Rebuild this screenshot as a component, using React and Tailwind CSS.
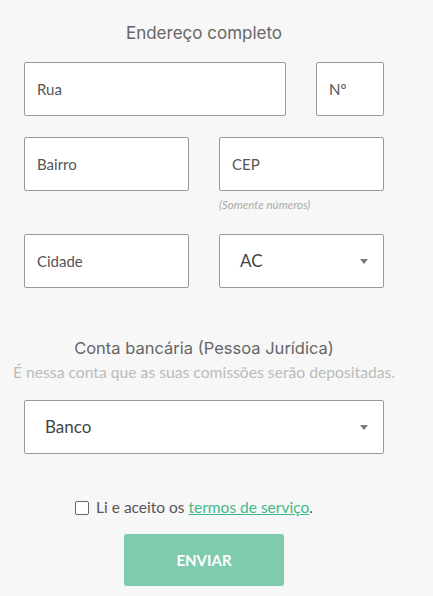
const Field = ({ label, className = "" }) => (
  <div className={`h-[54px] bg-white border border-[#999] rounded-[2px] flex items-center pl-3 text-[15px] text-[#555] ${className}`}>
    {label}
  </div>
);

const Select = ({ label, className = "" }) => (
  <div className={`h-[54px] bg-white border border-[#999] rounded-[2px] flex items-center pl-5 pr-[15px] text-[17px] text-[#444] ${className}`}>
    <span className="flex-1">{label}</span>
    <span className="w-0 h-0 border-l-[4px] border-r-[4px] border-t-[5px] border-l-transparent border-r-transparent border-t-[#777]" />
  </div>
);

export default function App() {
  return (
    <div className="min-h-[596px] bg-[#f7f7f7]" style={{ fontFamily: "Lato, 'Open Sans', sans-serif" }}>
      <div className="w-[408px] px-6 pt-[21px] pb-[10px]">
        <h2 className="text-center text-[17px] text-[#666] leading-6 mb-[17px]" style={{ fontFamily: "Inter, 'Open Sans', sans-serif", fontWeight: 400 }}>
          Endereço completo
        </h2>

        <div className="flex gap-[30px]">
          <Field label="Rua" className="flex-1" />
          <Field label="Nº" className="w-[68px]" />
        </div>

        <div className="grid grid-cols-2 gap-x-[30px] mt-[21px]">
          <Field label="Bairro" />
          <div>
            <Field label="CEP" />
            <div className="text-[11.5px] italic text-[#aaa] mt-[8px] leading-3">(Somente números)</div>
          </div>
        </div>

        <div className="grid grid-cols-2 gap-x-[30px] mt-[23px]">
          <Field label="Cidade" />
          <Select label="AC" />
        </div>

        <h2 className="text-center text-[16.5px] text-[#666] leading-6 mt-[48px]" style={{ fontFamily: "Inter, 'Open Sans', sans-serif", fontWeight: 400 }}>
          Conta bancária (Pessoa Jurídica)
        </h2>
        <p className="text-center text-[15.7px] text-[#bbb] leading-5 mt-[2px] -mx-3 whitespace-nowrap">
          É nessa conta que as suas comissões serão depositadas.
        </p>

        <Select label="Banco" className="mt-[18px]" />

        <label className="flex items-center justify-center gap-[7px] mt-[42px] mr-[20px] text-[15.5px] text-[#555]">
          <span className="w-[14px] h-[14px] border border-[#666] rounded-[2px] bg-white" />
          <span>
            Li e aceito os <a className="text-[#3fb98a] underline">termos de serviço</a>.
          </span>
        </label>

        <div className="flex justify-center mt-[15px]">
          <button className="w-[160px] h-[52px] rounded-[3px] bg-[#7ecbae] text-white font-bold text-[15px]">
            ENVIAR
          </button>
        </div>
      </div>
    </div>
  );
}
